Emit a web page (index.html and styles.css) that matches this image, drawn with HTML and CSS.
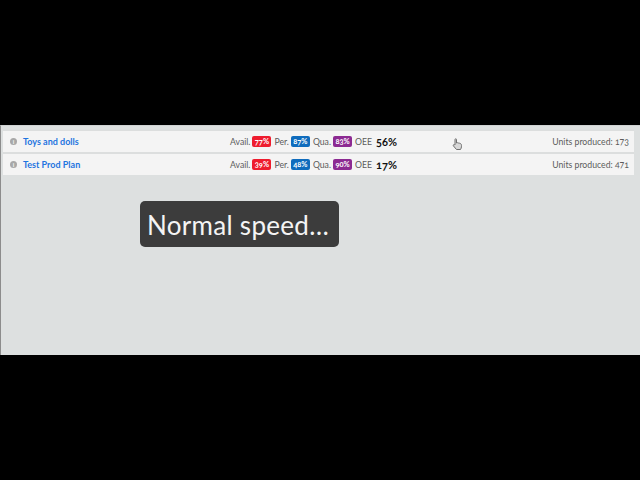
FILE: index.html
```html
<!DOCTYPE html>
<html>
<head>
    <meta charset="utf-8">
    <title>Production plans</title>
    <link rel="stylesheet" href="styles.css">
</head>
<body>
    <div class="screen">
        <div class="plan-row">
            <div class="plan-name">
                <span class="info-icon">i</span>
                <a class="plan-link" href="#">Toys and dolls</a>
            </div>
            <div class="plan-stats">
                <span>Avail.</span> <span class="badge badge-red">77%</span>
                <span>Per.</span> <span class="badge badge-blue">87%</span>
                <span>Qua.</span> <span class="badge badge-purple">83%</span>
                <span>OEE</span> <b class="oee">56%</b>
            </div>
            <div class="plan-units">Units produced: 173</div>
        </div>
        <div class="plan-row">
            <div class="plan-name">
                <span class="info-icon">i</span>
                <a class="plan-link" href="#">Test Prod Plan</a>
            </div>
            <div class="plan-stats">
                <span>Avail.</span> <span class="badge badge-red">39%</span>
                <span>Per.</span> <span class="badge badge-blue">48%</span>
                <span>Qua.</span> <span class="badge badge-purple">90%</span>
                <span>OEE</span> <b class="oee">17%</b>
            </div>
            <div class="plan-units">Units produced: 471</div>
        </div>

        <!-- hand cursor caught in the recording -->
        <svg class="cursor" width="11" height="13" viewBox="0 0 11 13">
            <path d="M3 1.500c0-1 1.500-1 1.500 0V5l1-.3 1 .3 1 .2 1.200.5c.8.5.8 1.500.8 2.500 0 1.500-.5 2.300-1 3.300H4.500L1.500 8c-.8-1 .3-2 1.500-1z" fill="#d8d8d8" stroke="#707070" stroke-width="1"/>
        </svg>

        <div class="caption">Normal speed…</div>
    </div>
</body>
</html>
```

FILE: styles.css
```css
body {
    margin: 0;
    background-color: #000;
    font-family: Lato, "Open Sans", sans-serif;
}

.screen {
    position: relative;
    box-sizing: border-box;
    margin-top: 125px;
    height: 230px;
    padding: 3px 6px 0 2px;
    background-color: #dde0e0;
    border-top: 1px solid #cfd2d2;
    border-left: 1px solid #8c8c8c;
}

.plan-row {
    display: grid;
    grid-template-columns: 220px auto 1fr;
    align-items: center;
    height: 23px;
    padding: 0 5px 0 7px;
    background-color: #f4f4f4;
    border-top: 2px solid #dcdede;
    box-sizing: border-box;
    font-size: 8.7px;
    font-variant-numeric: oldstyle-nums;
    color: #5c5c5c;
}

.plan-name {
    display: flex;
    align-items: center;
    gap: 6px;
}

.info-icon {
    width: 7px;
    height: 7px;
    border-radius: 50%;
    background-color: #a8a8a8;
    color: #f4f4f4;
    font-size: 6px;
    font-weight: 700;
    line-height: 7px;
    text-align: center;
}

.plan-link {
    color: #1f74e0;
    font-size: 9px;
    font-weight: 700;
    text-decoration: none;
}

.plan-stats {
    display: flex;
    align-items: center;
    gap: 2px;
}

.badge {
    width: 19px;
    box-sizing: border-box;
    margin-right: 1px;
    border-radius: 2px;
    color: #fff;
    font-size: 7.5px;
    font-weight: 700;
    line-height: 11px;
    text-align: center;
}

.badge-red {
    background-color: #ee1c2e;
}

.badge-blue {
    background-color: #0f6cbd;
}

.badge-purple {
    background-color: #8c2a92;
}

.oee {
    margin-left: 2px;
    color: #111;
    font-size: 11px;
}

.plan-units {
    text-align: right;
}

.cursor {
    position: absolute;
    left: 451px;
    top: 12px;
}

.caption {
    position: absolute;
    left: 139px;
    top: 75px;
    width: 199px;
    height: 46px;
    box-sizing: border-box;
    padding-left: 7px;
    background-color: #3c3c3c;
    border-radius: 5px;
    color: #f4f4f4;
    font-family: Lato, sans-serif;
    font-size: 26px;
    letter-spacing: .3px;
    line-height: 48px;
}
```
